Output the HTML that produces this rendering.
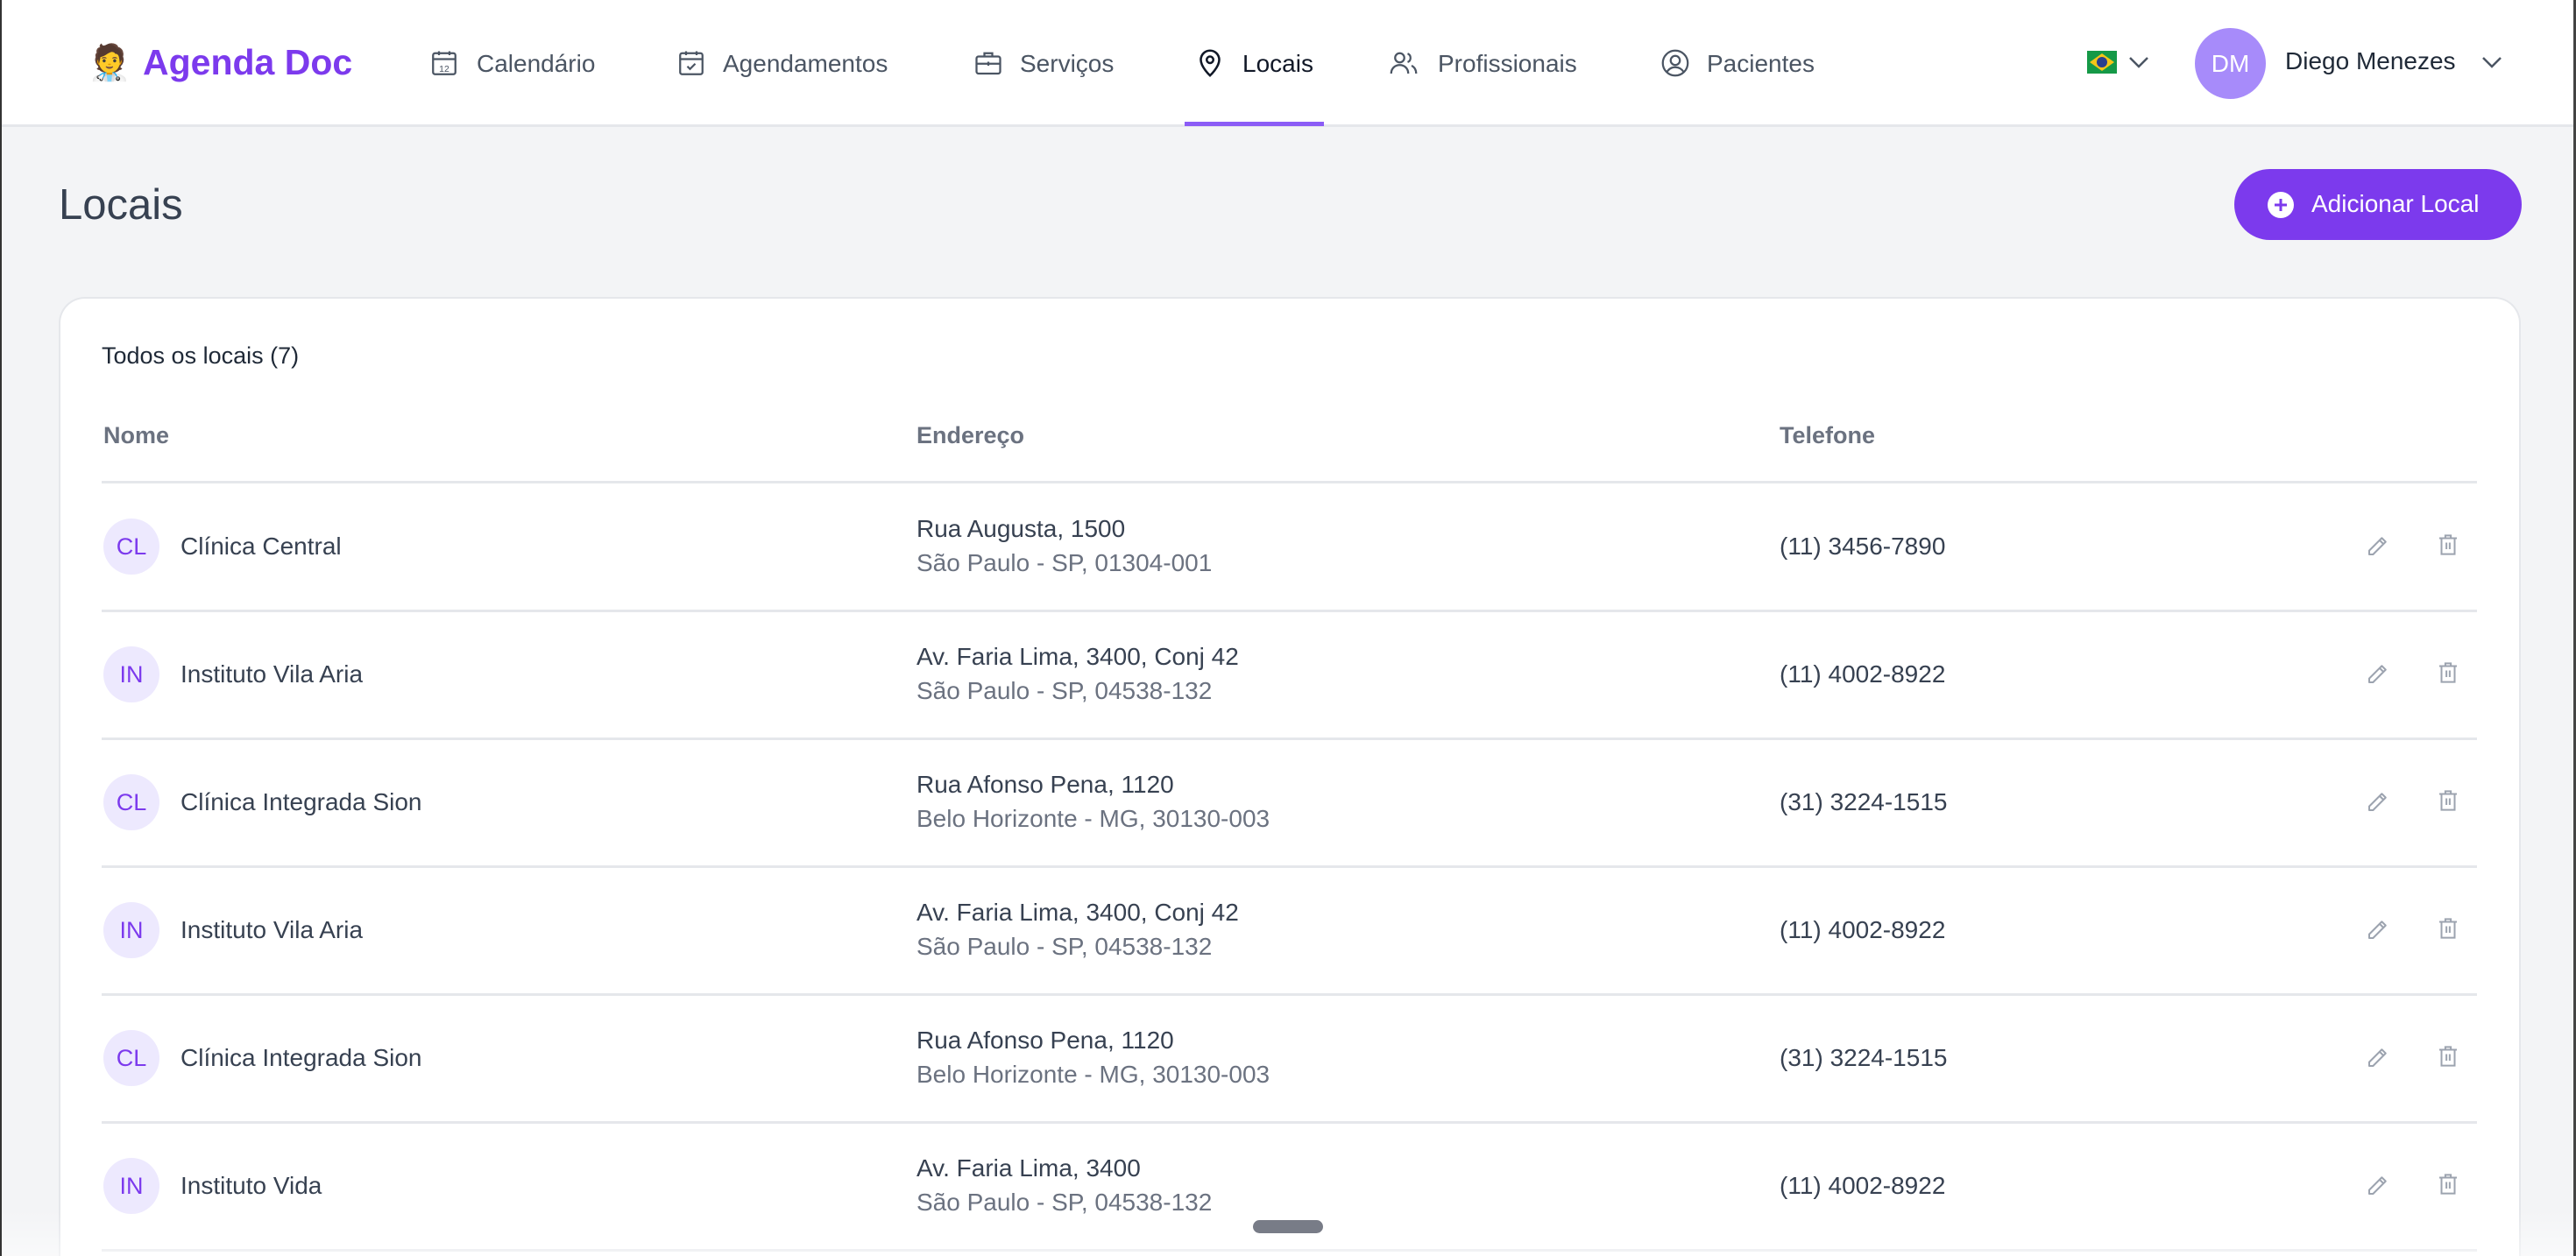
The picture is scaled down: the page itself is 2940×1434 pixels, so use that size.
<!DOCTYPE html>
<html style="width:2940px;height:1434px;overflow:hidden"><head><meta charset="utf-8"><style>
*{margin:0;padding:0;box-sizing:border-box}
body{width:2940px;height:1434px;overflow:hidden;background:#f3f4f6;font-family:"Liberation Sans",sans-serif;position:relative;color:#374151}
.a{position:absolute;white-space:nowrap}
.hdr{position:absolute;left:0;top:0;width:2940px;height:145px;background:#fff;border-bottom:3px solid #e5e7eb}
.nav{position:absolute;top:56px;font-size:28px;color:#4b5563;line-height:34px}
.ic{position:absolute;top:54px;width:36px;height:36px}
.card{position:absolute;left:67px;top:339px;width:2810px;height:1095px;background:#fff;border:2px solid #e5e7eb;border-bottom:none;border-radius:30px 30px 0 0}
.th{position:absolute;top:482px;font-size:27px;font-weight:bold;color:#6b7280}
.line{position:absolute;left:116px;width:2711px;height:3px;background:#e5e7eb}
.av{position:absolute;left:118px;width:64px;height:64px;border-radius:50%;background:#ede9fe;color:#7c3aed;font-size:27px;text-align:center;line-height:64px}
.t{position:absolute;font-size:28px;color:#374151;line-height:34px}
.s{color:#6b7280}
</style></head><body>
<div style="position:absolute;left:0;top:0;width:2px;height:1434px;background:#333;z-index:5"></div>
<div style="position:absolute;right:0;top:0;width:3px;height:1434px;background:#444;z-index:5"></div>
<div class="hdr"></div>
<div class="a" style="left:100px;top:48px;font-size:40px">🧑‍⚕️</div>
<div class="a" style="left:163px;top:48px;font-size:41px;font-weight:bold;color:#7c3aed">Agenda Doc</div>

<svg class="ic" style="left:489px" viewBox="0 0 24 24" fill="none" stroke="#4b5563" stroke-width="1.5"><rect x="3.5" y="4.5" width="17" height="16" rx="1.5"/><path d="M3.5 9h17M8 3v3M16 3v3"/><text x="12" y="18.5" font-size="7" text-anchor="middle" fill="#4b5563" stroke="none" font-family="Liberation Sans">12</text></svg>
<div class="nav a" style="left:544px">Calendário</div>
<svg class="ic" style="left:771px" viewBox="0 0 24 24" fill="none" stroke="#4b5563" stroke-width="1.5"><rect x="3.5" y="4.5" width="17" height="16" rx="1.5"/><path d="M3.5 9h17M8 3v3M16 3v3M9 14.5l2 2 4-4"/></svg>
<div class="nav a" style="left:825px">Agendamentos</div>
<svg class="ic" style="left:1110px" viewBox="0 0 24 24" fill="none" stroke="#4b5563" stroke-width="1.5"><rect x="3" y="7" width="18" height="13" rx="1.5"/><path d="M9 7V4.5h6V7M3 12.5h18M12 11v3"/></svg>
<div class="nav a" style="left:1164px">Serviços</div>
<svg class="ic" style="left:1363px" viewBox="0 0 24 24" fill="none" stroke="#111827" stroke-width="1.7"><path d="M12 21.5s-7-6.5-7-12a7 7 0 0 1 14 0c0 5.5-7 12-7 12z"/><circle cx="12" cy="9.5" r="2.5"/></svg>
<div class="nav a" style="left:1418px;color:#111827">Locais</div>
<div class="a" style="left:1352px;top:139px;width:159px;height:5px;background:#8b5cf6"></div>
<svg class="ic" style="left:1584px" viewBox="0 0 24 24" fill="none" stroke="#4b5563" stroke-width="1.5"><circle cx="9" cy="8" r="3.5"/><path d="M2.5 20c0-4 3-6.5 6.5-6.5s6.5 2.5 6.5 6.5M15 4.8a3.5 3.5 0 0 1 0 6.5M18 14c2 .8 3.5 3 3.5 6"/></svg>
<div class="nav a" style="left:1641px">Profissionais</div>
<svg class="ic" style="left:1894px" viewBox="0 0 24 24" fill="none" stroke="#4b5563" stroke-width="1.5"><circle cx="12" cy="12" r="9.5"/><circle cx="12" cy="10" r="3.5"/><path d="M5.5 19c1.5-2.5 3.8-3.8 6.5-3.8s5 1.3 6.5 3.8"/></svg>
<div class="nav a" style="left:1948px">Pacientes</div>

<svg class="a" style="left:2382px;top:58px" width="34" height="26" viewBox="0 0 34 26"><rect width="34" height="26" fill="#159947"/><path d="M17 3L31 13 17 23 3 13z" fill="#f5c518"/><circle cx="17" cy="13" r="6" fill="#2a3f8f"/></svg>
<svg class="a" style="left:2428px;top:62px" width="26" height="18" viewBox="0 0 26 18" fill="none" stroke="#4b5563" stroke-width="2.5"><path d="M3 4l10 10 10-10"/></svg>
<div class="a" style="left:2505px;top:32px;width:81px;height:81px;border-radius:50%;background:#a78bfa;color:#fff;font-size:28px;text-align:center;line-height:81px">DM</div>
<div class="a" style="left:2608px;top:54px;font-size:28px;color:#1f2937">Diego Menezes</div>
<svg class="a" style="left:2831px;top:62px" width="26" height="18" viewBox="0 0 26 18" fill="none" stroke="#4b5563" stroke-width="2.5"><path d="M3 4l10 10 10-10"/></svg>

<div class="a" style="left:67px;top:206px;font-size:49px;color:#374151">Locais</div>
<div class="a" style="left:2550px;top:193px;width:328px;height:81px;border-radius:41px;background:#7c3aed"></div>
<svg class="a" style="left:2587px;top:218px" width="32" height="32" viewBox="0 0 32 32"><circle cx="16" cy="16" r="15" fill="#fff"/><path d="M16 9v14M9 16h14" stroke="#7c3aed" stroke-width="3"/></svg>
<div class="a" style="left:2638px;top:217px;font-size:28px;color:#fff">Adicionar Local</div>

<div class="card"></div>
<div class="a" style="left:116px;top:391px;font-size:27px;color:#1f2937">Todos os locais (7)</div>
<div class="th" style="left:118px">Nome</div>
<div class="th" style="left:1046px">Endereço</div>
<div class="th" style="left:2031px">Telefone</div>
<div class="line" style="top:549px"></div>

<div class="av" style="top:592px">CL</div><div class="t" style="left:206px;top:607px">Clínica Central</div>
<div class="t" style="left:1046px;top:587px">Rua Augusta, 1500</div><div class="t s" style="left:1046px;top:626px">São Paulo - SP, 01304-001</div>
<div class="t" style="left:2031px;top:607px">(11) 3456-7890</div>
<div class="line" style="top:696px"></div>

<div class="av" style="top:738px">IN</div><div class="t" style="left:206px;top:753px">Instituto Vila Aria</div>
<div class="t" style="left:1046px;top:733px">Av. Faria Lima, 3400, Conj 42</div><div class="t s" style="left:1046px;top:772px">São Paulo - SP, 04538-132</div>
<div class="t" style="left:2031px;top:753px">(11) 4002-8922</div>
<div class="line" style="top:842px"></div>

<div class="av" style="top:884px">CL</div><div class="t" style="left:206px;top:899px">Clínica Integrada Sion</div>
<div class="t" style="left:1046px;top:879px">Rua Afonso Pena, 1120</div><div class="t s" style="left:1046px;top:918px">Belo Horizonte - MG, 30130-003</div>
<div class="t" style="left:2031px;top:899px">(31) 3224-1515</div>
<div class="line" style="top:988px"></div>

<div class="av" style="top:1030px">IN</div><div class="t" style="left:206px;top:1045px">Instituto Vila Aria</div>
<div class="t" style="left:1046px;top:1025px">Av. Faria Lima, 3400, Conj 42</div><div class="t s" style="left:1046px;top:1064px">São Paulo - SP, 04538-132</div>
<div class="t" style="left:2031px;top:1045px">(11) 4002-8922</div>
<div class="line" style="top:1134px"></div>

<div class="av" style="top:1176px">CL</div><div class="t" style="left:206px;top:1191px">Clínica Integrada Sion</div>
<div class="t" style="left:1046px;top:1171px">Rua Afonso Pena, 1120</div><div class="t s" style="left:1046px;top:1210px">Belo Horizonte - MG, 30130-003</div>
<div class="t" style="left:2031px;top:1191px">(31) 3224-1515</div>
<div class="line" style="top:1280px"></div>

<div class="av" style="top:1322px">IN</div><div class="t" style="left:206px;top:1337px">Instituto Vida</div>
<div class="t" style="left:1046px;top:1317px">Av. Faria Lima, 3400</div><div class="t s" style="left:1046px;top:1356px">São Paulo - SP, 04538-132</div>
<div class="t" style="left:2031px;top:1337px">(11) 4002-8922</div>
<div class="line" style="top:1426px"></div>

<svg width="0" height="0" style="position:absolute"><defs>
<g id="pen" fill="none" stroke="#9ca3af" stroke-width="1.6" stroke-linejoin="round"><path d="M4 20v-3.5L15.5 5l3.5 3.5L7.5 20z M13.5 7l3.5 3.5"/></g>
<g id="bin" fill="none" stroke="#9ca3af" stroke-width="1.6"><path d="M4 6h16M9.5 6V3.5h5V6M6 6v14.5h12V6M10.5 10v6M13.5 10v6"/></g>
</defs></svg>
<svg class="a" style="left:2699px;top:608px" width="30" height="30" viewBox="0 0 24 24"><use href="#pen"/></svg>
<svg class="a" style="left:2779px;top:607px" width="30" height="30" viewBox="0 0 24 24"><use href="#bin"/></svg>
<svg class="a" style="left:2699px;top:754px" width="30" height="30" viewBox="0 0 24 24"><use href="#pen"/></svg>
<svg class="a" style="left:2779px;top:753px" width="30" height="30" viewBox="0 0 24 24"><use href="#bin"/></svg>
<svg class="a" style="left:2699px;top:900px" width="30" height="30" viewBox="0 0 24 24"><use href="#pen"/></svg>
<svg class="a" style="left:2779px;top:899px" width="30" height="30" viewBox="0 0 24 24"><use href="#bin"/></svg>
<svg class="a" style="left:2699px;top:1046px" width="30" height="30" viewBox="0 0 24 24"><use href="#pen"/></svg>
<svg class="a" style="left:2779px;top:1045px" width="30" height="30" viewBox="0 0 24 24"><use href="#bin"/></svg>
<svg class="a" style="left:2699px;top:1192px" width="30" height="30" viewBox="0 0 24 24"><use href="#pen"/></svg>
<svg class="a" style="left:2779px;top:1191px" width="30" height="30" viewBox="0 0 24 24"><use href="#bin"/></svg>
<svg class="a" style="left:2699px;top:1338px" width="30" height="30" viewBox="0 0 24 24"><use href="#pen"/></svg>
<svg class="a" style="left:2779px;top:1337px" width="30" height="30" viewBox="0 0 24 24"><use href="#bin"/></svg>

<div class="a" style="left:0;top:1380px;width:2940px;height:54px;background:linear-gradient(rgba(255,255,255,0),rgba(255,255,255,0.5))"></div>
<div class="a" style="left:1430px;top:1393px;width:80px;height:15px;border-radius:8px;background:#787c87"></div>
</body></html>
